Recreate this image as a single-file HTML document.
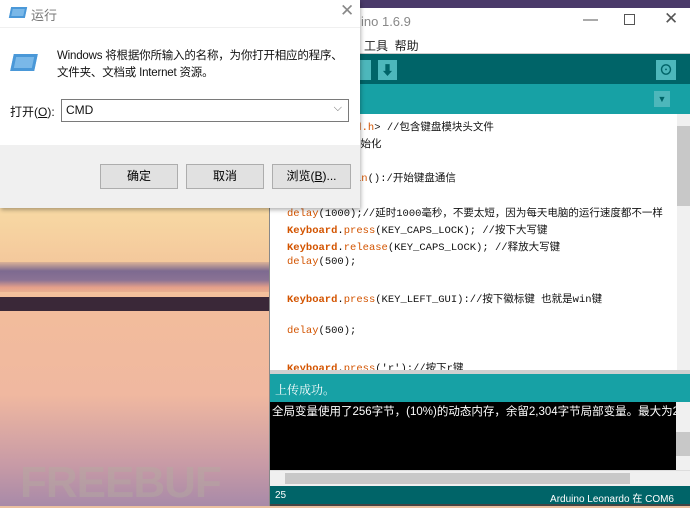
<!DOCTYPE html><html><head><meta charset="utf-8"><style>
*{margin:0;padding:0;box-sizing:border-box}
body{width:690px;height:506px;overflow:hidden;position:relative;font-family:"Liberation Sans","Noto Sans CJK SC",sans-serif;background:#eac0a0}
.abs{position:absolute}
.bg{left:0;top:0;width:690px;height:506px;background:linear-gradient(180deg,#f6d49c 0%,#f8dba4 40%,#f4c89c 52%,#f2bc9c 62%,#f0b8a0 78%,#c79aa6 92%,#a88aa8 100%)}
.cl{left:0;top:262px;width:270px;height:30px;background:linear-gradient(180deg,rgba(120,90,130,.2),#7d6a90 30%,#8a7294 60%,#e6a08a 85%,#e8b090);}
.hz{left:0;top:297px;width:270px;height:14px;background:#3a2838}
.code{font-family:"Liberation Mono","Noto Sans CJK SC",monospace;font-size:10.5px;color:#111;left:287px;white-space:pre}
.k{color:#d35400;font-weight:bold}.f{color:#d35400}
</style></head><body>
<div class="abs bg"></div>
<div class="abs cl"></div>
<div class="abs hz"></div>
<div class="abs" style="left:20px;top:458px;font:bold 44px 'Liberation Sans',sans-serif;color:rgba(180,170,160,.45);letter-spacing:-1px">FREEBUF</div>
<div class="abs" style="left:300px;top:0;width:390px;height:9px;background:#4a3a6a"></div>
<div class="abs" style="left:269px;top:8px;width:421px;height:498px;background:#fff;border-left:1px solid #888">
 <div class="abs" style="left:0;top:0;width:421px;height:27px;background:#fff;font-size:13px;color:#888;padding:6px 0 0 91px">ino 1.6.9
  <span class="abs" style="left:313px;top:3px;color:#555;font-size:15px">—</span>
  <span class="abs" style="left:354px;top:6px;width:11px;height:11px;border:1px solid #555"></span>
  <span class="abs" style="left:394px;top:1px;color:#555;font-size:17px">✕</span></div>
 <div class="abs" style="left:0;top:27px;width:421px;height:19px;font-size:12px;color:#222;padding:2px 0 0 94px;border-bottom:1px solid #ccc">工具&nbsp;&nbsp;帮助</div>
 <div class="abs" style="left:0;top:46px;width:421px;height:30px;background:#006468">
  <div class="abs" style="left:70px;top:6px;width:31px;height:20px;background:#4db7bb"></div>
  <div class="abs" style="left:108px;top:6px;width:19px;height:20px;background:#4db7bb;color:#006468;font-size:13px;text-align:center;font-weight:bold">⬇</div>
  <div class="abs" style="left:386px;top:6px;width:20px;height:20px;background:#4db7bb;color:#006468;font-size:14px;text-align:center;font-weight:bold">⊙</div>
 </div>
 <div class="abs" style="left:0;top:76px;width:421px;height:30px;background:#17a1a5">
  <div class="abs" style="left:384px;top:7px;width:16px;height:16px;background:#4db7bb;color:#006468;font-size:9px;text-align:center;line-height:16px">▼</div></div>
 <div class="abs" style="left:407px;top:106px;width:14px;height:256px;background:#f0f0f0"><div style="margin-top:12px;height:80px;background:#c8c8c8"></div></div>
</div>
<div class="abs code" style="top:119px;left:349px"><span class="f">rd.h</span>&gt; //包含键盘模块头文件</div>
<div class="abs code" style="top:136px;left:350px">初始化</div>
<div class="abs code" style="top:170px;left:355px"><span class="f">in</span>():/开始键盘通信</div>
<div class="abs code" style="top:205px"><span class="f">delay</span>(1000);//延时1000毫秒，不要太短，因为每天电脑的运行速度都不一样</div>
<div class="abs code" style="top:222px"><span class="k">Keyboard</span>.<span class="f">press</span>(KEY_CAPS_LOCK); //按下大写键</div>
<div class="abs code" style="top:239px"><span class="k">Keyboard</span>.<span class="f">release</span>(KEY_CAPS_LOCK); //释放大写键</div>
<div class="abs code" style="top:256px"><span class="f">delay</span>(500);</div>
<div class="abs code" style="top:291px"><span class="k">Keyboard</span>.<span class="f">press</span>(KEY_LEFT_GUI)://按下徽标键 也就是win键</div>
<div class="abs code" style="top:325px"><span class="f">delay</span>(500);</div>
<div class="abs code" style="top:360px;height:10px;overflow:hidden"><span class="k">Keyboard</span>.<span class="f">press</span>('r');//按下r键</div>
<div class="abs" style="left:270px;top:370px;width:420px;height:4px;background:#d0d0d0"></div>
<div class="abs" style="left:270px;top:374px;width:420px;height:28px;background:#17a1a5;color:#fff;font:12px 'Liberation Serif','Noto Serif CJK SC',serif;padding:7px 0 0 5px">上传成功。</div>
<div class="abs" style="left:270px;top:402px;width:420px;height:68px;background:#000;color:#fff;font-size:11.5px;white-space:nowrap;overflow:hidden;padding:1px 0 0 2px">全局变量使用了256字节，(10%)的动态内存，余留2,304字节局部变量。最大为2,560</div>
<div class="abs" style="left:676px;top:402px;width:14px;height:68px;background:#f0f0f0"><div style="margin-top:30px;height:24px;background:#c8c8c8"></div></div>
<div class="abs" style="left:270px;top:470px;width:420px;height:16px;background:#f0f0f0;border-top:1px solid #ddd"><div class="abs" style="left:15px;top:2px;width:345px;height:11px;background:#c8c8c8"></div></div>
<div class="abs" style="left:270px;top:486px;width:420px;height:18px;background:#006468;color:#fff;font-size:10px;padding:4px 0 0 5px">25<span class="abs" style="right:16px;top:4px">Arduino Leonardo 在 COM6</span></div>
<div class="abs" style="left:270px;top:504px;width:420px;height:2px;background:#444"></div>
<div class="abs" style="left:0;top:0;width:360px;height:208px;background:#fff;box-shadow:1px 2px 4px rgba(0,0,0,.3)">
 <div class="abs" style="left:10px;top:7px;width:16px;height:11px;background:#7ab8e8;transform:skewX(-12deg);border:2px solid #4a98d8"></div>
 <div class="abs" style="left:31px;top:5px;font-size:13px;color:#777">运行</div>
 <div class="abs" style="left:340px;top:1px;font-size:17px;color:#888">✕</div>
 <div class="abs" style="left:0;top:27px;width:360px;height:1px;background:#f0f0f0"></div>
 <div class="abs" style="left:12px;top:54px;width:24px;height:17px;background:#7ab8e8;transform:skewX(-12deg);border:3px solid #4a98d8"></div>
 <div class="abs" style="left:57px;top:48px;font-size:11.5px;color:#111;line-height:17px;white-space:nowrap;letter-spacing:-0.2px">Windows 将根据你所输入的名称，为你打开相应的程序、<br>文件夹、文档或 Internet 资源。</div>
 <div class="abs" style="left:10px;top:103px;font-size:12px;color:#111">打开(<u>O</u>):</div>
 <div class="abs" style="left:61px;top:99px;width:288px;height:23px;border:1px solid #7a7a7a;font-size:12px;padding:3px 0 0 4px;color:#111">CMD<span class="abs" style="right:6px;top:2px;color:#666;font-size:11px">⌵</span></div>
 <div class="abs" style="left:0;top:145px;width:360px;height:63px;background:#f0f0f0">
  <div class="abs" style="left:100px;top:19px;width:78px;height:25px;background:#e1e1e1;border:1px solid #adadad;font-size:12px;text-align:center;line-height:23px">确定</div>
  <div class="abs" style="left:186px;top:19px;width:78px;height:25px;background:#e1e1e1;border:1px solid #adadad;font-size:12px;text-align:center;line-height:23px">取消</div>
  <div class="abs" style="left:272px;top:19px;width:79px;height:25px;background:#e1e1e1;border:1px solid #adadad;font-size:12px;text-align:center;line-height:23px">浏览(<u>B</u>)...</div>
 </div>
</div>
</body></html>
